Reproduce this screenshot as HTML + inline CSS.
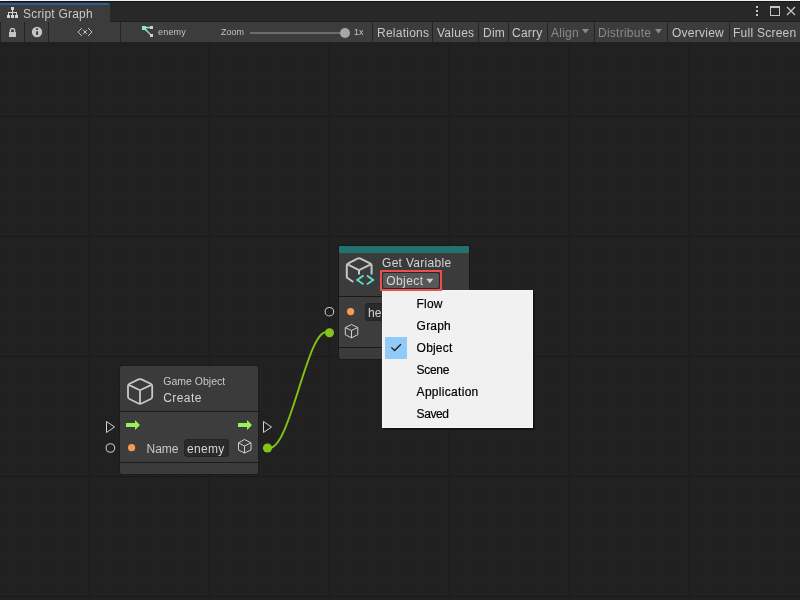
<!DOCTYPE html>
<html><head><meta charset="utf-8">
<style>
*{margin:0;padding:0;box-sizing:border-box}
html,body{width:800px;height:600px;overflow:hidden;background:#212121;font-family:"Liberation Sans",sans-serif}
.a{position:absolute}
#grid{left:0;top:42px;width:800px;height:558px;
 background-color:#212121;
 background-image:
  linear-gradient(to right,#1a1a1a 0,#1a1a1a 1px,transparent 1px),
  linear-gradient(to bottom,#1a1a1a 0,#1a1a1a 1px,transparent 1px),
  linear-gradient(to right,#202020 0,#202020 1px,transparent 1px),
  linear-gradient(to bottom,#1f1f1f 0,#1f1f1f 1px,transparent 1px);
 background-size:120px 120px,120px 120px,12px 12px,12px 12px;
 background-position:89px 74px,89px 74px,5px 2px,5px 2px;
}
#topline{left:0;top:0;width:800px;height:1px;background:#f0f0f0}
#tabbar{left:0;top:1px;width:800px;height:21px;background:#282828;border-top:1px solid #141414}
#tab{left:0;top:3px;width:110px;height:19px;background:#3c3c3c;border-top:2px solid #2c5f92;border-top-right-radius:2px}
#tabtitle{left:23px;top:8px;font-size:12px;letter-spacing:0.2px;color:#c8c8c8;line-height:1;white-space:nowrap}
#toolbar{left:0;top:22px;width:800px;height:20px;background:#232323}
.btn{position:absolute;top:0;height:20px;background:#3c3c3c;color:#c8c8c8;font-size:12px;letter-spacing:0.25px;line-height:22px;white-space:nowrap}
.dis{color:#8a8a8a}
.node{position:absolute;background:#3b3b3b;border:1px solid #1c1c1c;border-radius:3px}
.ntext{position:absolute;color:#d2d2d2;white-space:nowrap}
#menu{left:382px;top:290px;width:151px;height:138px;background:#f1f1f1;box-shadow:inset -1px -1px 0 #f7f7f7,inset 1px 1px 0 #f6f6f6,1px 1px 0 #101010,1.5px 1.5px 1px rgba(0,0,0,0.3)}
.mi{position:absolute;left:34.6px;font-size:12px;letter-spacing:0.2px;color:#000;-webkit-text-stroke:0.2px #000;line-height:1;white-space:nowrap;margin-top:1px}
</style></head><body><div id="root" style="position:absolute;left:0;top:0;width:800px;height:600px;will-change:transform">
<div id="grid" class="a"></div>
<div id="topline" class="a"></div>
<div id="tabbar" class="a"></div>
<div id="tab" class="a"></div>
<div class="a" style="left:110px;top:21px;width:690px;height:1px;background:#202020"></div>
<!-- tab icon -->
<svg class="a" style="left:0;top:0" width="20" height="20" viewBox="0 0 20 20">
 <g fill="#d4d4d4">
  <rect x="11" y="7" width="3" height="3"/>
  <rect x="12" y="10" width="1" height="2"/>
  <rect x="8" y="12" width="9" height="1"/>
  <rect x="8" y="13" width="1" height="2"/><rect x="12" y="13" width="1" height="2"/><rect x="16" y="13" width="1" height="2"/>
  <rect x="7" y="15" width="3" height="3"/><rect x="11" y="15" width="3" height="3"/><rect x="15" y="15" width="3" height="3"/>
 </g>
</svg>
<div id="tabtitle" class="a">Script Graph</div>
<!-- window controls -->
<svg class="a" style="left:750px;top:4px" width="50" height="16" viewBox="0 0 50 16">
 <g fill="#c4c4c4">
  <rect x="6" y="2" width="2" height="2"/><rect x="6" y="6" width="2" height="2"/><rect x="6" y="10" width="2" height="2"/>
 </g>
 <rect x="20.5" y="2.5" width="9" height="9" fill="none" stroke="#c4c4c4" stroke-width="1"/>
 <rect x="20" y="2" width="10" height="2" fill="#c4c4c4"/>
 <path d="M37 3 L45 11 M45 3 L37 11" stroke="#c4c4c4" stroke-width="1.3"/>
</svg>

<div id="toolbar" class="a">
 <div class="btn" style="left:1px;width:23px"></div>
 <div class="btn" style="left:25px;width:23px"></div>
 <div class="btn" style="left:49px;width:71px"></div>
 <div class="btn" style="left:121px;width:251px"></div>
 <div class="btn" style="left:373px;width:59px;padding-left:4px">Relations</div>
 <div class="btn" style="left:433px;width:45px;padding-left:4px">Values</div>
 <div class="btn" style="left:479px;width:29px;padding-left:4px">Dim</div>
 <div class="btn" style="left:509px;width:38px;padding-left:3px">Carry</div>
 <div class="btn dis" style="left:548px;width:46px;padding-left:3px">Align</div>
 <div class="btn dis" style="left:595px;width:72px;padding-left:3px">Distribute</div>
 <div class="btn" style="left:668px;width:61px;padding-left:4px">Overview</div>
 <div class="btn" style="left:730px;width:70px;padding-left:3px">Full Screen</div>
</div>

<!-- toolbar icons -->
<svg class="a" style="left:0;top:22px" width="372" height="20" viewBox="0 0 372 20">
 <!-- lock -->
 <path d="M10.4 10 V8.6 A2.1 2.1 0 0 1 14.6 8.6 V10" fill="none" stroke="#c4c4c4" stroke-width="1.4"/>
 <rect x="9" y="10" width="7" height="5" fill="#c4c4c4"/>
 <!-- info -->
 <circle cx="37" cy="10" r="5.2" fill="#c4c4c4"/>
 <rect x="36.2" y="6.3" width="1.7" height="1.6" fill="#2a2a2a"/>
 <rect x="36.2" y="9.3" width="1.7" height="3.6" fill="#2a2a2a"/>
 <!-- <x> -->
 <g fill="#c4c4c4"><rect x="81" y="6" width="1" height="1"/><rect x="80" y="7" width="1" height="1"/><rect x="79" y="8" width="1" height="1"/><rect x="78" y="9" width="1" height="1"/><rect x="78" y="10" width="1" height="1"/><rect x="79" y="11" width="1" height="1"/><rect x="80" y="12" width="1" height="1"/><rect x="81" y="13" width="1" height="1"/><rect x="88" y="6" width="1" height="1"/><rect x="89" y="7" width="1" height="1"/><rect x="90" y="8" width="1" height="1"/><rect x="91" y="9" width="1" height="1"/><rect x="91" y="10" width="1" height="1"/><rect x="90" y="11" width="1" height="1"/><rect x="89" y="12" width="1" height="1"/><rect x="88" y="13" width="1" height="1"/><rect x="83" y="8" width="1" height="1"/><rect x="86" y="8" width="1" height="1"/><rect x="84" y="9" width="1" height="1"/><rect x="85" y="9" width="1" height="1"/><rect x="84" y="10" width="1" height="1"/><rect x="85" y="10" width="1" height="1"/><rect x="83" y="11" width="1" height="1"/><rect x="86" y="11" width="1" height="1"/></g>
 <!-- enemy icon -->
 <defs><linearGradient id="eg" x1="0" y1="0" x2="1" y2="0"><stop offset="0" stop-color="#7fe8d6"/><stop offset="1" stop-color="#c8c8c8"/></linearGradient>
 <linearGradient id="eg2" x1="0" y1="0" x2="1" y2="1"><stop offset="0" stop-color="#7fe8d6"/><stop offset="0.6" stop-color="#b8b8b8"/></linearGradient></defs>
 <rect x="145" y="4.8" width="5.5" height="1.6" fill="url(#eg)"/>
 <path d="M144.5 6.5 L151.5 13.5" stroke="#b8b8b8" stroke-width="1.6"/>
 <path d="M144.5 6.5 L147 9" stroke="#80d8c8" stroke-width="1.6"/>
 <rect x="142" y="4" width="4" height="4" fill="#7ff0dc"/>
 <rect x="150" y="4" width="3" height="3" fill="#cfcfcf"/>
 <rect x="150" y="12" width="3" height="3" fill="#cfcfcf"/>
 <!-- slider -->
 <rect x="250" y="10" width="92" height="2" fill="#6c6c6c"/>
 <circle cx="345" cy="11" r="5" fill="#a6a6a6"/>
</svg>
<div class="a" style="left:158px;top:26px;font-size:9px;letter-spacing:0.2px;line-height:12px;color:#c4c4c4">enemy</div>
<div class="a" style="left:221px;top:26px;font-size:9px;line-height:12px;color:#c4c4c4">Zoom</div>
<div class="a" style="left:354px;top:26px;font-size:9px;line-height:12px;color:#c4c4c4">1x</div>
<!-- dropdown arrows -->
<svg class="a" style="left:582px;top:29px" width="8" height="6"><path d="M0 0 H7 L3.5 4.5 Z" fill="#8a8a8a"/></svg>
<svg class="a" style="left:655px;top:29px" width="8" height="6"><path d="M0 0 H7 L3.5 4.5 Z" fill="#8a8a8a"/></svg>

<!-- edge -->
<svg class="a" style="left:0;top:0" width="800" height="600">
 <path d="M267.6 447.7 C290.33 455.74, 308.12 318.7, 329.4 333" fill="none" stroke="#82c216" stroke-width="1.9"/>
</svg>

<!-- Create node -->
<div class="a" style="left:119px;top:365px;width:140px;height:110px;background:#1c1c1c;border-radius:3px"></div>
<div class="a" style="left:120px;top:366px;width:138px;height:45px;background:#3b3b3b;border-radius:2px 2px 0 0"></div>
<div class="a" style="left:120px;top:412px;width:138px;height:50px;background:#3d3d3d"></div>
<div class="a" style="left:120px;top:463px;width:138px;height:11px;background:#3b3b3b;border-radius:0 0 2px 2px"></div>
<div class="ntext" style="left:163.3px;top:376.3px;font-size:10.5px;line-height:1;color:#c8c8c8">Game Object</div>
<div class="ntext" style="left:163.3px;top:392px;font-size:12px;letter-spacing:0.4px;line-height:1;color:#d4d4d4">Create</div>
<div class="ntext" style="left:146.5px;top:443.2px;font-size:12px;line-height:1;color:#c8c8c8">Name</div>
<div class="a" style="left:184px;top:439px;width:45px;height:18px;background:#2a2a2a;border:1px solid #242424;border-radius:3px"></div>
<div class="ntext" style="left:187px;top:443.4px;font-size:12px;letter-spacing:0.3px;line-height:1;color:#d4d4d4">enemy</div>

<!-- Get Variable node -->
<div class="a" style="left:338px;top:245px;width:132px;height:115px;background:#1a1a1a;border-radius:0 0 3px 3px"></div>
<div class="a" style="left:339px;top:246px;width:130px;height:7px;background:#22716f"></div>
<div class="a" style="left:339px;top:253px;width:130px;height:43px;background:#3b3b3b"></div>
<div class="a" style="left:339px;top:297px;width:130px;height:50px;background:#3d3d3d"></div>
<div class="a" style="left:339px;top:348px;width:130px;height:11px;background:#3b3b3b;border-radius:0 0 2px 2px"></div>
<div class="ntext" style="left:382px;top:257px;font-size:12px;letter-spacing:0.3px;line-height:1;color:#d4d4d4">Get Variable</div>
<div class="a" style="left:382px;top:272px;width:58px;height:17px;background:#585858;border-radius:3px;border:1px solid #282828"></div>
<div class="ntext" style="left:386.3px;top:275.2px;font-size:12px;letter-spacing:0.4px;line-height:1;color:#d8d8d8">Object</div>
<div class="a" style="left:365px;top:303px;width:40px;height:18px;background:#2a2a2a;border:1px solid #242424;border-radius:3px"></div>
<div class="ntext" style="left:368px;top:306.5px;font-size:12px;line-height:1;color:#d4d4d4">hello</div>

<svg class="a" style="left:0;top:0" width="800" height="600">
 <!-- create node big cube -->
 <g fill="none" stroke="#c8c8c8" stroke-width="1.8" stroke-linejoin="round">
  <path d="M138.5 379.4 Q140 378.7 141.5 379.4 L150.7 383.8 Q152.2 384.5 152.2 386.1 L152.2 396.7 Q152.2 398.3 150.7 399 L141.5 403.5 Q140 404.2 138.5 403.5 L129.5 399 Q128 398.3 128 396.7 L128 386.1 Q128 384.5 129.5 383.8 Z"/>
  <path d="M128.8 384.9 L140 390.2 L151.4 384.9 M140 390.2 L140 403.8"/>
 </g>
 <!-- get variable cube with <> -->
 <g fill="none" stroke="#c6c6c6" stroke-width="2" stroke-linejoin="round">
  <path d="M353.3 282 L346.8 277.5 L346.8 265.6 Q346.8 264 348.3 263.3 L357.5 258.6 Q359 257.9 360.5 258.6 L370.1 263.3 Q371.6 264 371.6 265.6 L371.6 274.5"/>
  <path d="M347.6 264.4 L359 270.2 L370.8 264.4 M359 270.2 L359 274.5"/>
 </g>
 <g fill="none" stroke="#5ce8d2" stroke-width="1.75" stroke-linejoin="miter">
  <path d="M363.5 275.5 L357.2 280 L363.5 284.4"/>
  <path d="M366.9 275.5 L373.2 280 L366.9 284.4"/>
 </g>
 <!-- dropdown arrow -->
 <path d="M426.3 278.8 H433.3 L429.8 283.2 Z" fill="#d0d0d0"/>
 <!-- ports create node -->
 <path d="M106.5 421.5 L114.5 427 L106.5 432.5 Z" fill="none" stroke="#d0d0d0" stroke-width="1"/>
 <circle cx="110.4" cy="448" r="4.3" fill="none" stroke="#c8c8c8" stroke-width="1.05"/>
 <path d="M126 423 H135 V420 L140 425 L135 430 V427 H126 Z" fill="#98f05a"/>
 <circle cx="131.6" cy="447.7" r="3.6" fill="#f49c56"/>
 <path d="M238 423 H247 V420 L252 425 L247 430 V427 H238 Z" fill="#98f05a"/>
 <path d="M263.5 421.5 L271.5 427 L263.5 432.5 Z" fill="none" stroke="#d0d0d0" stroke-width="1"/>
 <g fill="none" stroke="#cfcfcf" stroke-width="1" stroke-linejoin="round">
  <path d="M244.5 439.5 L251 442.8 L251 450 L244.5 453 L238.5 450 L238.5 442.8 Z M238.5 442.8 L244.5 446 L251 442.8 M244.5 446 L244.5 453"/>
 </g>
 <circle cx="267.5" cy="448" r="4.6" fill="#82c41c"/>
 <!-- ports get variable -->
 <circle cx="329.4" cy="311.7" r="4.3" fill="none" stroke="#c8c8c8" stroke-width="1.05"/>
 <circle cx="350.6" cy="311.6" r="3.6" fill="#f49c56"/>
 <circle cx="329.5" cy="332.8" r="4.5" fill="#82c41c"/>
 <g fill="none" stroke="#cfcfcf" stroke-width="1" stroke-linejoin="round">
  <path d="M351.5 324.5 L357.8 327.5 L357.8 334.7 L351.5 337.8 L345.3 334.7 L345.3 327.5 Z M345.3 327.5 L351.5 330.5 L357.8 327.5 M351.5 330.5 L351.5 337.8"/>
 </g>
</svg>

</div>
<div id="menu" class="a">
 <div class="a" style="left:3px;top:47px;width:22px;height:22px;background:#91c9f7"></div>
 <svg class="a" style="left:3px;top:47px" width="22" height="22"><path d="M6.3 10.4 L9.6 13.5 L15.9 7.2" fill="none" stroke="#1e1e1e" stroke-width="1.3"/></svg>
 <div class="mi" style="top:7.4px">Flow</div>
 <div class="mi" style="top:29.4px">Graph</div>
 <div class="mi" style="top:51.4px">Object</div>
 <div class="mi" style="top:73.4px;letter-spacing:-0.3px">Scene</div>
 <div class="mi" style="top:95.4px;letter-spacing:0.3px">Application</div>
 <div class="mi" style="top:117.4px;letter-spacing:-0.4px">Saved</div>
</div>
<div class="a" style="left:380px;top:270px;width:62px;height:21px;border:2px solid #e9504e"></div>
</body></html>
